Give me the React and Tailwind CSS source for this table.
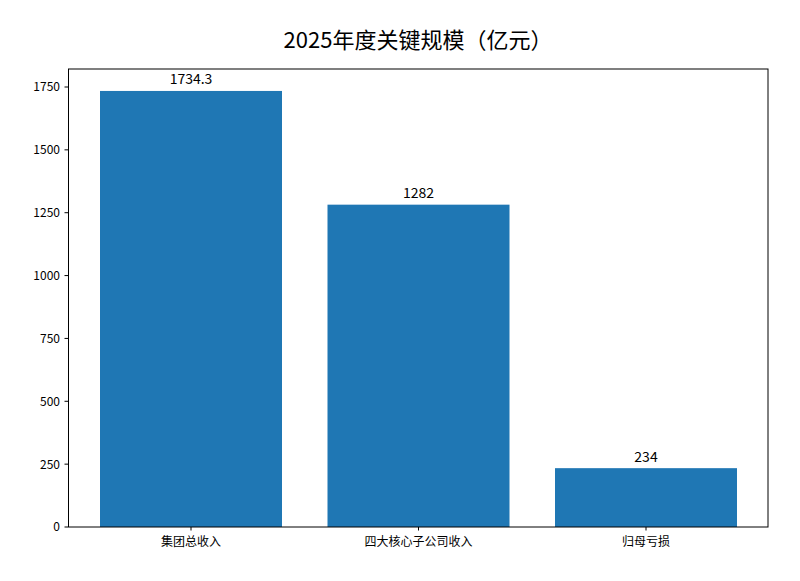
import React from "react";

const y0 = 527;
const k = 440 / 1750;
const yOf = (v) => y0 - v * k;

const bars = [
  { label: "集团总收入", value: 1734.3, text: "1734.3", cx: 191 },
  { label: "四大核心子公司收入", value: 1282, text: "1282", cx: 418.5 },
  { label: "归母亏损", value: 234, text: "234", cx: 646 },
];
const ticks = [0, 250, 500, 750, 1000, 1250, 1500, 1750];

export default function App() {
  return (
    <div className="w-[800px] h-[581px] bg-white flex flex-col font-['Noto_Sans_CJK_SC','Noto_Sans',sans-serif]">
      <div className="h-[68px] pt-[25px] pl-[36px] flex justify-center text-[22px] leading-[26px] text-black">
        2025年度关键规模（亿元）
      </div>
      <svg width="800" height="513" viewBox="0 68 800 513" className="block">
        {bars.map((b) => (
          <g key={b.label}>
            <rect x={b.cx - 91} y={yOf(b.value)} width={182} height={y0 - yOf(b.value)} fill="#1f77b4" />
            <text x={b.cx} y={yOf(b.value) - 6.5} textAnchor="middle" fontSize="14" fill="#000">
              {b.text}
            </text>
            <line x1={b.cx} x2={b.cx} y1={y0} y2={y0 + 3.5} stroke="#000" strokeWidth="1" />
            <text x={b.cx} y={546} textAnchor="middle" fontSize="12" fill="#000">
              {b.label}
            </text>
          </g>
        ))}
        {ticks.map((t) => (
          <g key={t}>
            <line x1={64.5} x2={68} y1={yOf(t)} y2={yOf(t)} stroke="#000" strokeWidth="1" />
            <text x={60} y={yOf(t) + 4.4} textAnchor="end" fontSize="12" fill="#000">
              {t}
            </text>
          </g>
        ))}
        <rect x={68.5} y={69} width={699.5} height={458} fill="none" stroke="#000" strokeWidth="1" />
      </svg>
    </div>
  );
}
